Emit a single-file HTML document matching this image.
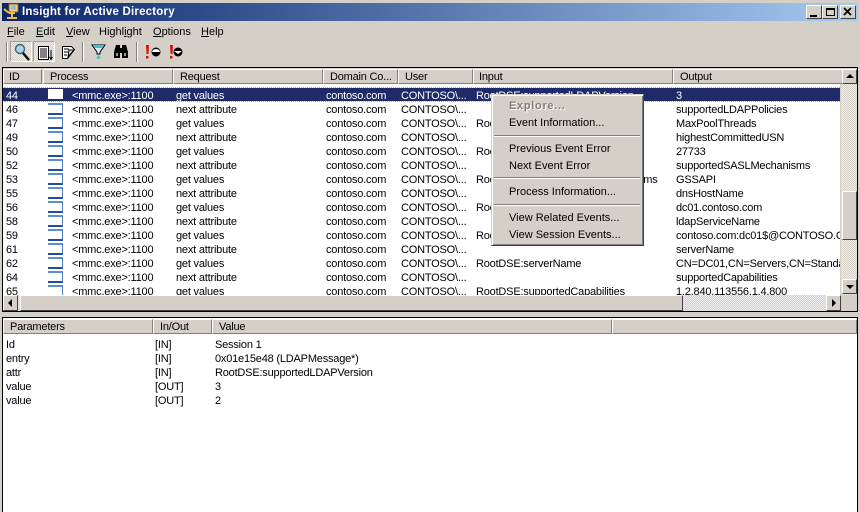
<!DOCTYPE html>
<html><head><meta charset="utf-8">
<style>
html,body{margin:0;padding:0;background:#d4d0c8}
body{width:860px;height:512px;position:relative;overflow:hidden;font:11px "Liberation Sans",sans-serif;letter-spacing:-.2px;color:#000}
div,span{position:absolute;white-space:nowrap}
.tb{left:2px;top:3px;width:856px;height:18px;background:linear-gradient(90deg,#0a246a,#a6caf0)}
.wb{top:5px;width:16px;height:14px;background:#d4d0c8;border:1px solid;border-color:#fff #404040 #404040 #fff;box-sizing:border-box}
.m{top:26px;line-height:13px;letter-spacing:0}
.m u{text-decoration:underline}
.sep{top:42px;width:1px;height:20px;background:#808080;border-right:1px solid #fff}
.hd{top:69px;height:15px;line-height:15px;background:#d4d0c8;box-sizing:border-box;border-right:1px solid #808080;border-bottom:1px solid #808080;padding-left:6px;border-top:1px solid #fff;border-left:1px solid #fff}
.r{left:3px;width:837px;height:14px;line-height:14px;overflow:hidden}
.r span{top:1px;white-space:nowrap}
.a{left:3px}.b{left:69px}.c{left:173px}.d{left:323px}.e{left:398px}.f{left:473px}.g{left:673px}
.r .ic{left:45px;top:1px;width:15px;height:12px;background:#fff;border-style:solid;border-width:2px 1px 2px 0;border-color:#5b8fd0 #4a80c8 #1f4f9b transparent;box-sizing:border-box}
.sel{background:#1f2a69;color:#fff}
.p{left:6px;line-height:14px}
.mi{left:509px;line-height:13px;letter-spacing:0}
.ms{left:494px;width:146px;height:1px;background:#808080;border-bottom:1px solid #fff}
.chk{background-color:#eee;background-image:linear-gradient(45deg,#d4d0c8 25%,transparent 25%,transparent 75%,#d4d0c8 75%),linear-gradient(45deg,#d4d0c8 25%,transparent 25%,transparent 75%,#d4d0c8 75%);background-size:2px 2px;background-position:0 0,1px 1px}
.btn{background:#d4d0c8;box-sizing:border-box;border:1px solid;border-color:#fff #404040 #404040 #fff}
</style></head><body>
<div class="tb"></div>
<svg style="position:absolute;left:3px;top:3px" width="18" height="17" viewBox="0 0 18 17"><rect x="6" y="1" width="9" height="8" fill="#f0d890" stroke="#806020"/><rect x="8" y="2" width="5" height="5" fill="#a0b8e8"/><path d="M1 6l5 4M6 10h6M9 10v4M4 15h10" stroke="#f0c040" stroke-width="2" fill="none"/></svg>
<div style="left:22px;top:5px;font:bold 11.5px 'Liberation Sans',sans-serif;color:#fff;line-height:15px;letter-spacing:.2px">Insight for Active Directory</div>
<div class="wb" style="left:806px"><span style="left:3px;top:9px;width:7px;height:2px;background:#000"></span></div>
<div class="wb" style="left:822px"><span style="left:3px;top:2px;width:9px;height:8px;border:1px solid #000;border-top-width:2px;box-sizing:border-box"></span></div>
<div class="wb" style="left:840px"><svg style="position:absolute;left:2px;top:1px" width="10" height="10"><path d="M1 1l7 7M8 1l-7 7" stroke="#000" stroke-width="1.7"/></svg></div>

<div class="m" style="left:7px"><u>F</u>ile</div>
<div class="m" style="left:36px"><u>E</u>dit</div>
<div class="m" style="left:66px"><u>V</u>iew</div>
<div class="m" style="left:99px">Highl<u>i</u>ght</div>
<div class="m" style="left:153px"><u>O</u>ptions</div>
<div class="m" style="left:201px"><u>H</u>elp</div>

<div class="sep" style="left:6px"></div>
<div class="chk" style="left:10px;top:41px;width:22px;height:21px;box-sizing:border-box;border:1px solid;border-color:#a0a0a0 #fff #fff #a0a0a0"></div>
<div class="chk" style="left:33px;top:41px;width:22px;height:21px;box-sizing:border-box;border:1px solid;border-color:#a0a0a0 #fff #fff #a0a0a0"></div>
<svg style="position:absolute;left:0;top:40px" width="200" height="24" viewBox="0 0 200 24">
<circle cx="20" cy="9" r="4.5" fill="#a8d8e8" stroke="#406080" stroke-width="1.4"/><path d="M23 13l6 7" stroke="#000" stroke-width="2.4"/>
<rect x="38.500" y="6.500" width="10" height="13" fill="#fff" stroke="#000"/><path d="M40 9h7M40 11h7M40 13h7M40 15h7M40 17h7" stroke="#000"/><path d="M51 10v9M49.500 17l1.500 2.500l1.500-2.500" stroke="#000" fill="none"/>
<path d="M62.500 6.500h9l3 3-7 9h-5z" fill="#fff" stroke="#000"/><path d="M64 9h5M64 12h4M64 15h3" stroke="#000"/><path d="M69 10l5 0 -6 7z" fill="#ddd" stroke="#000"/>
<path d="M92 5h13l-5 7v2h-3v-2z" fill="#d8f0f4" stroke="#000"/><path d="M93 5h11l-2 3h-7z" fill="#40c0d8"/><path d="M98.500 15l2 2.500-2 2-2-2z" fill="#40c0d8"/>
<path d="M114 18v-6l2-7h4v13zM122 18v-13h4l2 7v6zM120 8h2v5h-2z" fill="#000"/><rect x="116" y="13" width="2" height="3" fill="#fff" opacity=".6"/><rect x="124" y="13" width="2" height="3" fill="#fff" opacity=".6"/>
<path d="M146 5h3l-.5 9h-2zM146 16h2.500v2.500h-2.500z" fill="#e01010"/><circle cx="156" cy="12" r="4.5" fill="#000"/><path d="M152 12a4 3 0 0 1 8 0z" fill="#fff"/>
<path d="M170 5h3l-.5 9h-2zM170 16h2.500v2.500h-2.500z" fill="#e01010"/><circle cx="178" cy="12" r="4.500" fill="#000"/><path d="M174 11h8l-4 3z" fill="#fff"/>
</svg>
<div class="sep" style="left:82px"></div>
<div class="sep" style="left:136px"></div>

<!-- top list -->
<div style="left:2px;top:67px;width:856px;height:1px;background:#000"></div>
<div style="left:2px;top:67px;width:1px;height:244px;background:#000"></div>
<div style="left:857px;top:67px;width:1px;height:244px;background:#000"></div>
<div style="left:2px;top:311px;width:856px;height:1px;background:#000"></div>
<div style="left:3px;top:84px;width:837px;height:212px;background:#fff"></div>

<div class="hd" style="left:3px;width:39px;padding-left:5px">ID</div>
<div class="hd" style="left:43px;width:130px">Process</div>
<div class="hd" style="left:173px;width:150px">Request</div>
<div class="hd" style="left:323px;width:75px">Domain Co...</div>
<div class="hd" style="left:398px;width:75px">User</div>
<div class="hd" style="left:473px;width:200px;padding-left:5px">Input</div>
<div class="hd" style="left:673px;width:184px">Output</div>

<div style="left:4px;top:87px;width:836px;height:15px;box-sizing:border-box;border-top:1px dotted #c8b070;border-bottom:1px dotted #c8b070"></div>
<div class="r sel" style="top:88px;height:13px"><span class="a">44</span><span class="ic" style="background:#fff;top:1px;height:10px;border:0"></span><span class="b">&lt;mmc.exe&gt;:1100</span><span class="c">get values</span><span class="d">contoso.com</span><span class="e">CONTOSO\...</span><span class="f">RootDSE:supportedLDAPVersion</span><span class="g">3</span></div>
<div class="r" style="top:102px"><span class="a">46</span><span class="ic"></span><span class="b">&lt;mmc.exe&gt;:1100</span><span class="c">next attribute</span><span class="d">contoso.com</span><span class="e">CONTOSO\...</span><span class="g">supportedLDAPPolicies</span></div>
<div class="r" style="top:116px"><span class="a">47</span><span class="ic"></span><span class="b">&lt;mmc.exe&gt;:1100</span><span class="c">get values</span><span class="d">contoso.com</span><span class="e">CONTOSO\...</span><span class="f">RootDSE:supportedLDAPPolicies</span><span class="g">MaxPoolThreads</span></div>
<div class="r" style="top:130px"><span class="a">49</span><span class="ic"></span><span class="b">&lt;mmc.exe&gt;:1100</span><span class="c">next attribute</span><span class="d">contoso.com</span><span class="e">CONTOSO\...</span><span class="g">highestCommittedUSN</span></div>
<div class="r" style="top:144px"><span class="a">50</span><span class="ic"></span><span class="b">&lt;mmc.exe&gt;:1100</span><span class="c">get values</span><span class="d">contoso.com</span><span class="e">CONTOSO\...</span><span class="f">RootDSE:highestCommittedUSN</span><span class="g">27733</span></div>
<div class="r" style="top:158px"><span class="a">52</span><span class="ic"></span><span class="b">&lt;mmc.exe&gt;:1100</span><span class="c">next attribute</span><span class="d">contoso.com</span><span class="e">CONTOSO\...</span><span class="g">supportedSASLMechanisms</span></div>
<div class="r" style="top:172px"><span class="a">53</span><span class="ic"></span><span class="b">&lt;mmc.exe&gt;:1100</span><span class="c">get values</span><span class="d">contoso.com</span><span class="e">CONTOSO\...</span><span class="f">RootDSE:supportedSASLMechanisms</span><span class="g">GSSAPI</span></div>
<div class="r" style="top:186px"><span class="a">55</span><span class="ic"></span><span class="b">&lt;mmc.exe&gt;:1100</span><span class="c">next attribute</span><span class="d">contoso.com</span><span class="e">CONTOSO\...</span><span class="g">dnsHostName</span></div>
<div class="r" style="top:200px"><span class="a">56</span><span class="ic"></span><span class="b">&lt;mmc.exe&gt;:1100</span><span class="c">get values</span><span class="d">contoso.com</span><span class="e">CONTOSO\...</span><span class="f">RootDSE:dnsHostName</span><span class="g">dc01.contoso.com</span></div>
<div class="r" style="top:214px"><span class="a">58</span><span class="ic"></span><span class="b">&lt;mmc.exe&gt;:1100</span><span class="c">next attribute</span><span class="d">contoso.com</span><span class="e">CONTOSO\...</span><span class="g">ldapServiceName</span></div>
<div class="r" style="top:228px"><span class="a">59</span><span class="ic"></span><span class="b">&lt;mmc.exe&gt;:1100</span><span class="c">get values</span><span class="d">contoso.com</span><span class="e">CONTOSO\...</span><span class="f">RootDSE:ldapServiceName</span><span class="g">contoso.com:dc01$@CONTOSO.C</span></div>
<div class="r" style="top:242px"><span class="a">61</span><span class="ic"></span><span class="b">&lt;mmc.exe&gt;:1100</span><span class="c">next attribute</span><span class="d">contoso.com</span><span class="e">CONTOSO\...</span><span class="g">serverName</span></div>
<div class="r" style="top:256px"><span class="a">62</span><span class="ic"></span><span class="b">&lt;mmc.exe&gt;:1100</span><span class="c">get values</span><span class="d">contoso.com</span><span class="e">CONTOSO\...</span><span class="f">RootDSE:serverName</span><span class="g">CN=DC01,CN=Servers,CN=Standa</span></div>
<div class="r" style="top:270px"><span class="a">64</span><span class="ic"></span><span class="b">&lt;mmc.exe&gt;:1100</span><span class="c">next attribute</span><span class="d">contoso.com</span><span class="e">CONTOSO\...</span><span class="g">supportedCapabilities</span></div>
<div class="r" style="top:284px;height:12px"><span class="a">65</span><span class="ic"></span><span class="b">&lt;mmc.exe&gt;:1100</span><span class="c">get values</span><span class="d">contoso.com</span><span class="e">CONTOSO\...</span><span class="f">RootDSE:supportedCapabilities</span><span class="g">1.2.840.113556.1.4.800</span></div>

<!-- v scrollbar -->
<div class="chk" style="left:841px;top:84px;width:16px;height:212px"></div>
<div class="btn" style="left:842px;top:69px;width:15px;height:15px"><span style="left:3px;top:4px;border:4px solid transparent;border-top:0;border-bottom:4px solid #000"></span></div>
<div class="btn" style="left:842px;top:191px;width:15px;height:49px"></div>
<div class="btn" style="left:842px;top:279px;width:15px;height:15px"><span style="left:3px;top:5px;border:4px solid transparent;border-bottom:0;border-top:4px solid #000"></span></div>
<!-- h scrollbar -->
<div style="left:841px;top:295px;width:16px;height:16px;background:#d4d0c8"></div>
<div class="chk" style="left:3px;top:295px;width:838px;height:16px"></div>
<div class="btn" style="left:3px;top:295px;width:15px;height:16px"><span style="left:4px;top:3px;border:4px solid transparent;border-left:0;border-right:4px solid #000"></span></div>
<div class="btn" style="left:20px;top:295px;width:663px;height:16px"></div>
<div class="btn" style="left:826px;top:295px;width:15px;height:16px"><span style="left:5px;top:3px;border:4px solid transparent;border-right:0;border-left:4px solid #000"></span></div>

<!-- lower list -->
<div style="left:2px;top:317px;width:856px;height:195px;background:#fff;border:1px solid #000;border-bottom:0;box-sizing:border-box"></div>
<div class="hd" style="left:3px;top:319px;width:150px">Parameters</div>
<div class="hd" style="left:153px;top:319px;width:59px">In/Out</div>
<div class="hd" style="left:212px;top:319px;width:400px">Value</div>
<div class="hd" style="left:612px;top:319px;width:245px"></div>
<div class="p" style="top:338px">Id</div><div class="p" style="left:155px;top:338px">[IN]</div><div class="p" style="left:215px;top:338px">Session 1</div>
<div class="p" style="top:352px">entry</div><div class="p" style="left:155px;top:352px">[IN]</div><div class="p" style="left:215px;top:352px">0x01e15e48 (LDAPMessage*)</div>
<div class="p" style="top:366px">attr</div><div class="p" style="left:155px;top:366px">[IN]</div><div class="p" style="left:215px;top:366px">RootDSE:supportedLDAPVersion</div>
<div class="p" style="top:380px">value</div><div class="p" style="left:155px;top:380px">[OUT]</div><div class="p" style="left:215px;top:380px">3</div>
<div class="p" style="top:394px">value</div><div class="p" style="left:155px;top:394px">[OUT]</div><div class="p" style="left:215px;top:394px">2</div>

<!-- context menu -->
<div style="left:491px;top:94px;width:153px;height:152px;background:#d4d0c8;box-sizing:border-box;border:1px solid;border-color:#d4d0c8 #404040 #404040 #d4d0c8;box-shadow:inset 1px 1px 0 #fff,inset -1px -1px 0 #808080"></div>
<div class="mi" style="top:100px;font-weight:bold;color:#808080;text-shadow:1px 1px 0 #fff;letter-spacing:.7px">Explore...</div>
<div class="mi" style="top:117px">Event Information...</div>
<div class="ms" style="top:135px"></div>
<div class="mi" style="top:143px">Previous Event Error</div>
<div class="mi" style="top:160px">Next Event Error</div>
<div class="ms" style="top:177px"></div>
<div class="mi" style="top:186px">Process Information...</div>
<div class="ms" style="top:204px"></div>
<div class="mi" style="top:212px">View Related Events...</div>
<div class="mi" style="top:229px">View Session Events...</div>
</body></html>
